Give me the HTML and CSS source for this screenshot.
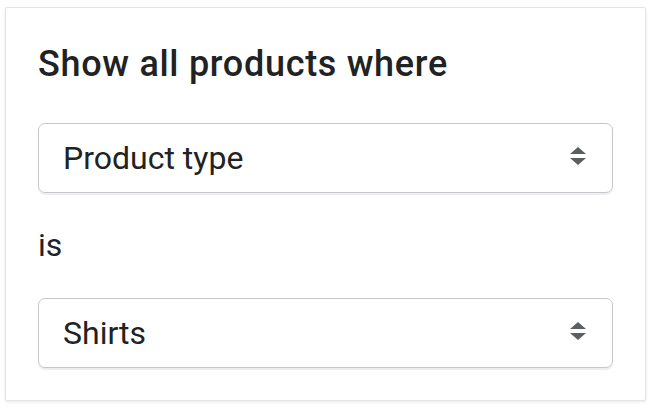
FILE: index.html
```html
<!DOCTYPE html>
<html lang="en">
<head>
  <meta charset="UTF-8" />
  <title>Product filter</title>
  <link rel="stylesheet" href="styles.css">
</head>
<body>

  <div class="card">
    <h2 class="card-title">Show all products where</h2>

    <div class="select">
      <span class="select-value">Product type</span>
      <svg class="select-arrows" width="16" height="18" viewBox="0 0 16 18">
        <path d="M0 7 L8 0 L16 7 Z M0 11 L16 11 L8 18 Z" />
      </svg>
    </div>

    <p class="label">is</p>

    <div class="select">
      <span class="select-value">Shirts</span>
      <svg class="select-arrows" width="16" height="18" viewBox="0 0 16 18">
        <path d="M0 7 L8 0 L16 7 Z M0 11 L16 11 L8 18 Z" />
      </svg>
    </div>
  </div>

</body>
</html>
```

FILE: styles.css
```css
:root {
  --ink: #202223;
  --border: #c4c8cc;
  --arrow: #5c5f62;
}

body {
  font-family: Roboto, 'Noto Sans', sans-serif;
  background: #fff;
  color: var(--ink);
  margin: 0;
  padding: 7px 6px 8px 5px;
}

.card {
  background: #fff;
  border: 1px solid #e4e5e7;
  box-shadow: 0 1px 3px rgba(63, 63, 68, 0.12);
  border-radius: 2px;
  padding: 32px;
}

.card-title {
  margin: 0 0 35px;
  font-size: 36px;
  line-height: 48px;
  font-weight: 500;
  letter-spacing: 0.7px;
}

.select {
  display: flex;
  align-items: center;
  justify-content: space-between;
  height: 68px;
  padding: 0 26px 0 24px;
  border: 1px solid var(--border);
  border-radius: 7px;
  box-shadow: 0 2px 1px rgba(22, 29, 37, 0.08);
}

.select-value {
  font-size: 32px;
  line-height: 40px;
}

.select-arrows {
  fill: var(--arrow);
  margin-top: -4px;
}

.label {
  margin: 0;
  padding: 30px 0 31px;
  font-size: 32px;
  line-height: 44px;
}
```
